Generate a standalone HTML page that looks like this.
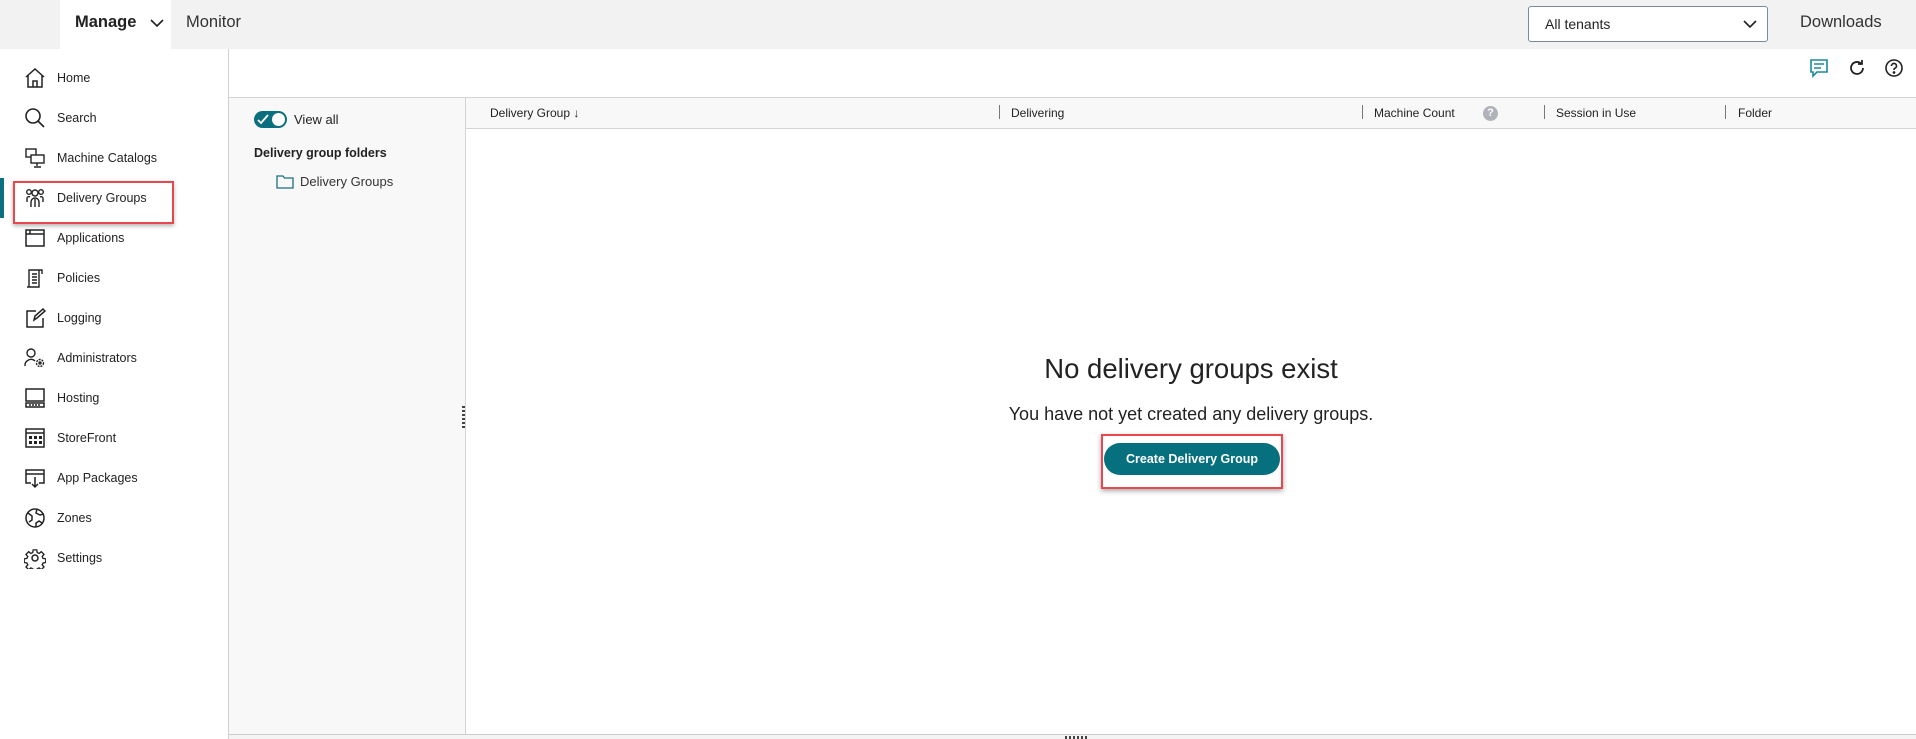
<!DOCTYPE html>
<html><head><meta charset="utf-8"><style>
*{box-sizing:border-box;margin:0;padding:0}
body{width:1916px;height:739px;overflow:hidden;background:#fff;font-family:"Liberation Sans",sans-serif;color:#222;position:relative}
.a{position:absolute}
.top{left:0;top:0;width:1916px;height:49px;background:#f2f2f2}
.nav{font-size:12.5px;color:#222}
.ic{position:absolute;left:24px;width:22px;height:22px}
.th{position:absolute;top:106px;font-size:12px;color:#222}
.sep{position:absolute;top:105px;width:1px;height:14px;background:#777}
</style></head><body>
<div class="a top"></div>
<div class="a" style="left:60px;top:0;width:111px;height:49px;background:#fff"></div>
<div class="a" style="left:75px;top:13px;font-size:16.5px;font-weight:bold">Manage</div>
<svg class="a" style="left:150px;top:18px" width="14" height="10" viewBox="0 0 14 10"><path d="M1 2l6 6 6-6" fill="none" stroke="#222" stroke-width="1.6"/></svg>
<div class="a" style="left:186px;top:13px;font-size:16.5px;color:#333">Monitor</div>
<div class="a" style="left:1528px;top:6px;width:240px;height:36px;border:1px solid #7a8a9a;border-radius:3px;background:#fff"></div>
<div class="a" style="left:1545px;top:16px;font-size:14px">All tenants</div>
<svg class="a" style="left:1743px;top:19px" width="14" height="10" viewBox="0 0 14 10"><path d="M1 2l6 6 6-6" fill="none" stroke="#222" stroke-width="1.6"/></svg>
<div class="a" style="left:1800px;top:13px;font-size:16.5px;color:#333">Downloads</div>

<div class="a" style="left:228px;top:49px;width:1px;height:690px;background:#d0d0d0"></div>
<div class="a" style="left:0;top:178px;width:4px;height:40px;background:#0a6f7e"></div>
<div class="a" style="left:13px;top:181px;width:161px;height:43px;border:2px solid #e8474e;box-shadow:0 2px 4px rgba(0,0,0,.3)"></div>
<svg class="ic" style="top:67px" viewBox="0 0 22 22" fill="none" stroke="#222" stroke-width="1.5"><path d="M2 10L11 2l9 8M4 8v12h14V8M9 20v-6h4v6"/></svg>
<svg class="ic" style="top:107px" viewBox="0 0 22 22" fill="none" stroke="#222" stroke-width="1.6"><circle cx="9" cy="9" r="7"/><path d="M14 14l6 6"/></svg>
<svg class="ic" style="top:147px" viewBox="0 0 22 22" fill="none" stroke="#222" stroke-width="1.4"><rect x="2" y="2" width="10" height="8"/><rect x="7" y="8" width="13" height="8" fill="#fff"/><path d="M13 16v3M10 20h7"/></svg>
<svg class="ic" style="top:187px" viewBox="0 0 22 22" fill="none" stroke="#222" stroke-width="1.4"><circle cx="11" cy="6" r="3"/><circle cx="5" cy="5" r="2.3"/><circle cx="17" cy="5" r="2.3"/><path d="M7 20v-5a4 4 0 0 1 8 0v5M3 15v-4a2 2 0 0 1 3-1M19 15v-4a2 2 0 0 0-3-1M11 12v8"/></svg>
<svg class="ic" style="top:227px" viewBox="0 0 22 22" fill="none" stroke="#222" stroke-width="1.5"><rect x="2" y="3" width="18" height="16"/><path d="M2 7h18M6 3v4"/></svg>
<svg class="ic" style="top:267px" viewBox="0 0 22 22" fill="none" stroke="#222" stroke-width="1.4"><path d="M5 20V3h13v4M5 20h10V3M8 7h5M8 10h5M8 13h5M8 16h5M3 20h12"/></svg>
<svg class="ic" style="top:307px" viewBox="0 0 22 22" fill="none" stroke="#222" stroke-width="1.5"><path d="M12 4H3v16h16v-9M10 13l1-4 8-7 2 2-8 7z"/></svg>
<svg class="ic" style="top:347px" viewBox="0 0 22 22" fill="none" stroke="#222" stroke-width="1.4"><circle cx="7" cy="6" r="4"/><path d="M1 19a6 6 0 0 1 10-5"/><circle cx="16" cy="16" r="3.5" stroke-dasharray="2 1"/><circle cx="16" cy="16" r="1"/></svg>
<svg class="ic" style="top:387px" viewBox="0 0 22 22" fill="none" stroke="#222" stroke-width="1.5"><rect x="2" y="2" width="18" height="12"/><rect x="2" y="16" width="18" height="4"/><path d="M5 18h12" stroke-dasharray="2 1"/></svg>
<svg class="ic" style="top:427px" viewBox="0 0 22 22" fill="none" stroke="#222" stroke-width="1.5"><rect x="2" y="2" width="18" height="18"/><path d="M2 6h18" /><path d="M5 9h3v3H5zM10 9h3v3h-3zM15 9h3v3h-3zM5 14h3v3H5zM10 14h3v3h-3zM15 14h3v3h-3z" fill="#222" stroke="none"/></svg>
<svg class="ic" style="top:467px" viewBox="0 0 22 22" fill="none" stroke="#222" stroke-width="1.5"><path d="M7 16H2V3h18v13h-5M2 7h18M11 10v10M8 17l3 3 3-3"/></svg>
<svg class="ic" style="top:507px" viewBox="0 0 22 22" fill="none" stroke="#222" stroke-width="1.5"><circle cx="11" cy="11" r="9"/><path d="M4 6l4 3v4l-3 2M13 2l-1 4 4 2 4-1M12 20v-4l3-2 3 2"/></svg>
<svg class="ic" style="top:547px" viewBox="0 0 22 22" fill="none" stroke="#222" stroke-width="1.5"><circle cx="11" cy="11" r="3"/><path d="M9 2h4l.5 3 2 1 2.5-2 3 3-2 2.5 1 2 3 .5v0l0 4-3 .5-1 2 2 2.5-3 3-2.5-2-2 1-.5 3H9l-.5-3-2-1-2.5 2-3-3 2-2.5-1-2-3-.5v-4l3-.5 1-2-2-2.5 3-3 2.5 2 2-1z" transform="scale(.9) translate(1.2 1.2)"/></svg>
<div class="a nav" style="left:57px;top:71px">Home</div>
<div class="a nav" style="left:57px;top:111px">Search</div>
<div class="a nav" style="left:57px;top:151px">Machine Catalogs</div>
<div class="a nav" style="left:57px;top:191px">Delivery Groups</div>
<div class="a nav" style="left:57px;top:231px">Applications</div>
<div class="a nav" style="left:57px;top:271px">Policies</div>
<div class="a nav" style="left:57px;top:311px">Logging</div>
<div class="a nav" style="left:57px;top:351px">Administrators</div>
<div class="a nav" style="left:57px;top:391px">Hosting</div>
<div class="a nav" style="left:57px;top:431px">StoreFront</div>
<div class="a nav" style="left:57px;top:471px">App Packages</div>
<div class="a nav" style="left:57px;top:511px">Zones</div>
<div class="a nav" style="left:57px;top:551px">Settings</div>

<svg class="a" style="left:1809px;top:58px" width="20" height="20" viewBox="0 0 20 20" fill="none" stroke="#1a8a9a" stroke-width="1.6"><path d="M2 2h16v12H8l-4 4v-4H2z"/><path d="M5 6h10M5 10h7"/></svg>
<svg class="a" style="left:1847px;top:58px" width="20" height="20" viewBox="0 0 20 20" fill="none" stroke="#222" stroke-width="1.8"><path d="M16 10a6 6 0 1 1-2-4.5"/><path d="M15 2v4h-4" /></svg>
<svg class="a" style="left:1884px;top:58px" width="20" height="20" viewBox="0 0 20 20" fill="none" stroke="#222" stroke-width="1.6"><circle cx="10" cy="10" r="8"/><path d="M7.5 8a2.5 2.5 0 1 1 3.5 2.2c-.8.4-1 .8-1 1.8"/><circle cx="10" cy="14.5" r=".6" fill="#222"/></svg>

<div class="a" style="left:229px;top:97px;width:1687px;height:1px;background:#d4d4d4"></div>
<div class="a" style="left:229px;top:98px;width:237px;height:636px;background:#f8f8f8"></div>
<div class="a" style="left:465px;top:98px;width:1px;height:636px;background:#d4d4d4"></div>
<div class="a" style="left:466px;top:98px;width:1450px;height:31px;background:#f8f8f8;border-bottom:1px solid #d4d4d4"></div>
<div class="a" style="left:229px;top:734px;width:1687px;height:5px;background:#f4f4f4;border-top:1px solid #ccc"></div>
<div class="a" style="left:1065px;top:736px;width:22px;height:3px;background:repeating-linear-gradient(90deg,#444 0 2px,transparent 2px 4px)"></div>
<div class="a" style="left:462px;top:406px;width:3px;height:22px;background:repeating-linear-gradient(180deg,#444 0 2px,transparent 2px 4px)"></div>

<div class="a" style="left:254px;top:111px;width:33px;height:17px;border-radius:9px;background:#0a6f7e"></div>
<div class="a" style="left:272px;top:113px;width:13px;height:13px;border-radius:50%;background:#fff"></div>
<svg class="a" style="left:257px;top:114px" width="12" height="11" viewBox="0 0 12 11"><path d="M1 6l3 3 7-8" fill="none" stroke="#fff" stroke-width="1.8"/></svg>
<div class="a" style="left:294px;top:112px;font-size:13px">View all</div>
<div class="a" style="left:254px;top:146px;font-size:12.5px;font-weight:bold">Delivery group folders</div>
<svg class="a" style="left:276px;top:174px" width="18" height="15" viewBox="0 0 18 15" fill="none" stroke="#1a6f80" stroke-width="1.3"><path d="M1 2h6l1.5 2H17v10H1z"/></svg>
<div class="a" style="left:300px;top:174px;font-size:13px;color:#333">Delivery Groups</div>

<div class="th" style="left:490px">Delivery Group ↓</div>
<div class="sep" style="left:999px"></div><div class="th" style="left:1011px">Delivering</div>
<div class="sep" style="left:1362px"></div><div class="th" style="left:1374px">Machine Count</div>
<div class="a" style="left:1483px;top:106px;width:15px;height:15px;border-radius:50%;background:#b0b4ba;color:#fff;font-size:11px;font-weight:bold;text-align:center;line-height:15px">?</div>
<div class="sep" style="left:1544px"></div><div class="th" style="left:1556px">Session in Use</div>
<div class="sep" style="left:1725px"></div><div class="th" style="left:1738px">Folder</div>

<div class="a" style="left:466px;top:353px;width:1450px;text-align:center;font-size:27.5px;color:#222">No delivery groups exist</div>
<div class="a" style="left:466px;top:404px;width:1450px;text-align:center;font-size:18px;color:#222">You have not yet created any delivery groups.</div>
<div class="a" style="left:1101px;top:434px;width:182px;height:55px;border:2px solid #e8474e;box-shadow:0 2px 5px rgba(0,0,0,.35)"></div>
<div class="a" style="left:1104px;top:443px;width:176px;height:32px;border-radius:16px;background:#07707f;color:#fff;font-size:12.5px;font-weight:bold;text-align:center;line-height:32px">Create Delivery Group</div>
</body></html>
